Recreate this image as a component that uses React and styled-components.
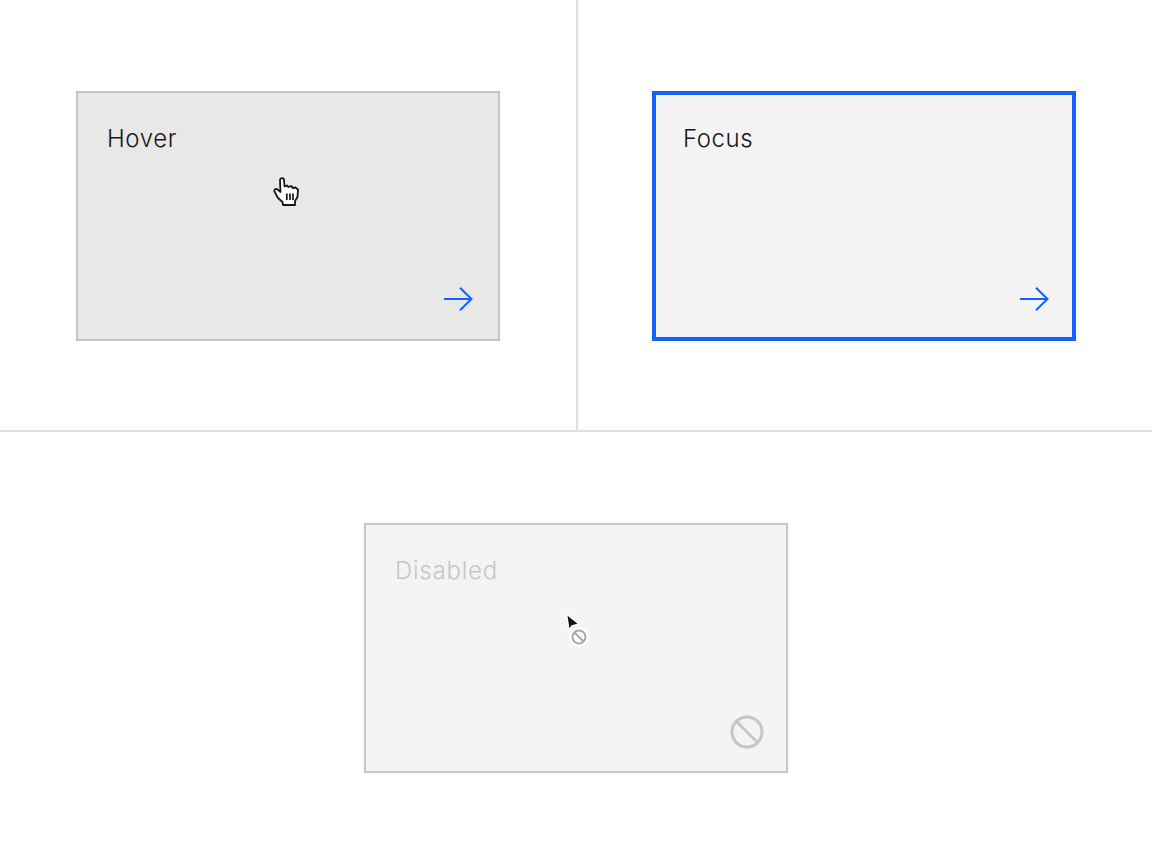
import React from 'react'
import styled, { createGlobalStyle } from 'styled-components'

const GlobalStyle = createGlobalStyle`
  html, body {
    margin: 0;
    padding: 0;
    background: #ffffff;
  }
  * {
    box-sizing: border-box;
  }
`

function ArrowIcon() {
  return (
    <svg width="30" height="24" viewBox="0 0 30 24" fill="none" stroke="#0f62fe" strokeWidth="2">
      <path d="M0 12H27.5" />
      <path d="M16 0.7L27.5 12L16 23.3" />
    </svg>
  )
}

function BlockedIcon() {
  return (
    <svg width="34" height="34" viewBox="0 0 34 34" fill="none" stroke="#c6c6c6" strokeWidth="3">
      <circle cx="17" cy="17" r="15" />
      <path d="M6.5 6.5L27.5 27.5" />
    </svg>
  )
}

function HandCursor() {
  return (
    <svg width="27" height="30" viewBox="0 0 27 30">
      <path
        d="M7 3C7 .5 11 .5 11 3L11.5 9.5L14 8.5L15.5 10L18 9L20 11L22.5 10.5L25 12.5L24.5 20L22 24V28H10L9.5 25L5 21L1.5 14.5C.8 12.5 3 11 4.5 12.5L7.5 15Z"
        fill="#ffffff"
        stroke="#161616"
        strokeWidth="1.8"
        strokeLinejoin="round"
      />
      <path d="M13.8 16.5V23M17 16.5V23M20 16.5V23" stroke="#161616" strokeWidth="1.7" />
    </svg>
  )
}

function BlockedCursor() {
  return (
    <svg width="28" height="38" viewBox="0 0 28 38">
      <path d="M3.5 3L16 13L9 15L6 19.5Z" fill="#161616" stroke="#ffffff" strokeWidth="1.5" strokeLinejoin="round" />
      <circle cx="16" cy="26" r="10" fill="#ffffff" opacity="0.9" />
      <circle cx="16" cy="26" r="6.5" fill="#ffffff" stroke="#a8a8a8" strokeWidth="2" />
      <path d="M11.5 21.5L20.5 30.5" stroke="#a8a8a8" strokeWidth="2" />
    </svg>
  )
}

export default function App() {
  return (
    <Page>
      <GlobalStyle />
      <TopRow>
        <Cell>
          <Tile $state="hover">
            <TileLabel>Hover</TileLabel>
            <IconSlot><ArrowIcon /></IconSlot>
            <PointerSlot $x={195} $y={84}><HandCursor /></PointerSlot>
          </Tile>
        </Cell>
        <RightCell>
          <Tile $state="focus">
            <TileLabel>Focus</TileLabel>
            <IconSlot><ArrowIcon /></IconSlot>
          </Tile>
        </RightCell>
      </TopRow>
      <BottomRow>
        <Tile $state="disabled">
          <TileLabel $disabled>Disabled</TileLabel>
          <IconSlot><BlockedIcon /></IconSlot>
          <PointerSlot $x={197} $y={86} $soft><BlockedCursor /></PointerSlot>
        </Tile>
      </BottomRow>
    </Page>
  )
}

const Page = styled.div`
    width:1152px;
    height:864px;
    overflow:hidden;
    background:#ffffff;
    font-family:"Inter","Liberation Sans",sans-serif;
`
const TopRow = styled.div`
    display:grid;
    grid-template-columns:576px 576px;
    height:432px;
    border-bottom:2px solid #e0e0e0;
`
const Cell = styled.div`
    display:flex;
    justify-content:center;
    padding-top:91px;
`
const RightCell = styled(Cell)`
    border-left:2px solid #e0e0e0;
    justify-content:flex-start;
    padding-left:74px;
`
const BottomRow = styled.div`
    display:flex;
    justify-content:center;
    padding-top:91px;
`
const tileStates = {
    hover:{ background:"#e8e8e8", border:"2px solid #c6c6c6", padding:"30px 24px 28px 29px" },
    focus:{ background:"#f4f4f4", border:"4px solid #0f62fe", padding:"28px 22px 26px 27px" },
    disabled:{ background:"#f4f4f4", border:"2px solid #c6c6c6", padding:"30px 22px 22px 29px" },
}

const Tile = styled.div`
    position:relative;
    display:flex;
    flex-direction:column;
    justify-content:space-between;
    width:424px;
    height:250px;
    padding:${p => tileStates[p.$state].padding};
    background:${p => tileStates[p.$state].background};
    border:${p => tileStates[p.$state].border};
`
const TileLabel = styled.div`
    font-size:24px;
    line-height:32px;
    font-weight:350;
    letter-spacing:${p => p.$disabled ? "0.75px" : "0.6px"};
    color:${p => p.$disabled ? "#c6c6c6" : "#161616"};
`
const IconSlot = styled.div`
    display:flex;
    justify-content:flex-end;
    line-height:0;
`
const PointerSlot = styled.div`
    position:absolute;
    left:${p => p.$x}px;
    top:${p => p.$y}px;
    line-height:0;
    filter:${p => p.$soft ? "blur(0.5px)" : "none"};
`
